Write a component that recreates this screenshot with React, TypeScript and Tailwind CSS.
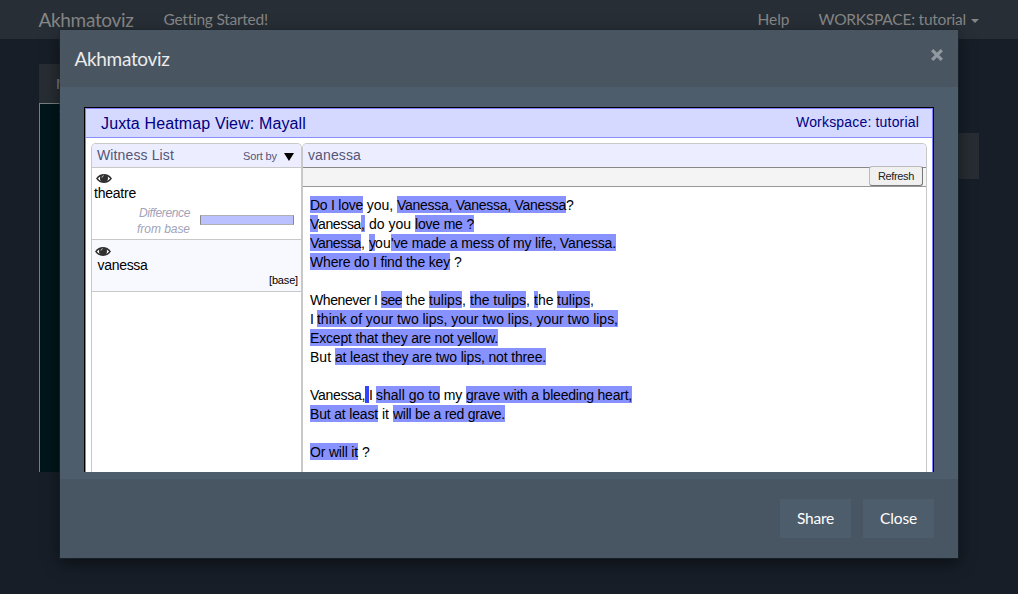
import React from "react";

type Segment = { text: string; width: number; tone?: "on" | "strong" };

const plain = (text: string, width: number): Segment => ({ text, width });
const diff = (text: string, width: number): Segment => ({ text, width, tone: "on" });

const poem: Segment[][] = [
  [diff("Do I love", 53), plain(" you, ", 34), diff("Vanessa, Vanessa, Vanessa", 169), plain("?", 8)],
  [diff("V", 8), plain("anessa", 43), diff(",", 4), plain(" do you ", 50), diff("love me ?", 59)],
  [diff("Vanessa", 51), plain(", ", 8), diff("y", 6), plain("ou", 16), diff("'ve made a mess of my life, Vanessa.", 225)],
  [diff("Where do I find the key", 140), plain(" ?", 12)],
  [],
  [
    plain("Whenever I ", 71), diff("see", 21), plain(" the ", 27), diff("tulips", 33), plain(", ", 8),
    diff("the tulips", 56), plain(", ", 8), diff("t", 4), plain("he ", 19), diff("tulips", 33), plain(",", 4),
  ],
  [plain("I ", 7), diff("think of your two lips, your two lips, your two lips,", 301)],
  [diff("Except that they are not yellow.", 188)],
  [plain("But ", 25), diff("at least they are two lips, not three.", 211)],
  [],
  [
    plain("Vanessa,", 55), { text: " ", width: 4, tone: "strong" }, plain("I ", 7), diff("shall go to", 64),
    plain(" my ", 26), diff("grave with a bleeding heart,", 166),
  ],
  [diff("But at least", 68), plain(" it ", 15), diff("will be a red grave.", 112)],
  [],
  [diff("Or will it", 48), plain(" ?", 12)],
];

function Fit({ text, width, className = "" }: { text: string; width: number; className?: string }) {
  const ref = React.useRef<HTMLSpanElement>(null);
  const [spacing, setSpacing] = React.useState(0);
  React.useLayoutEffect(() => {
    const el = ref.current;
    if (!el) return;
    setSpacing((width - el.getBoundingClientRect().width) / text.length);
  }, [text, width]);
  return (
    <span ref={ref} className={"inline-block flex-none whitespace-pre " + className} style={{ letterSpacing: spacing }}>
      {text}
    </span>
  );
}

function PoemSegment({ segment }: { segment: Segment }) {
  const tone =
    segment.tone === "strong" ? "bg-[#3344ff]" : segment.tone === "on" ? "bg-[#8892ff]" : "";
  return <Fit text={segment.text} width={segment.width} className={"h-[17px] " + tone} />;
}

function Eye() {
  return (
    <svg width="16" height="11" viewBox="0 0 16 11" className="block">
      <path d="M0 5.4C4 -.4 12 -.4 16 5.4 12 11.4 4 11.4 0 5.4Z" fill="#303030" />
      <path d="M1.9 5.6C2.6 4.6 3.4 3.9 4.3 3.4 3.8 4.8 3.9 6.6 4.8 8 3.6 7.4 2.6 6.6 1.9 5.6ZM14.1 5.6C13.4 4.6 12.6 3.9 11.7 3.4 12.2 4.8 12.1 6.6 11.2 8 12.4 7.4 13.4 6.6 14.1 5.6Z" fill="#fff" />
      <path d="M6 4.5C6.2 3.4 6.8 2.8 7.7 2.7" stroke="#ddd" strokeWidth="1" fill="none" />
    </svg>
  );
}

function Navbar() {
  return (
    <nav className="flex h-[39px] items-start bg-[#272e35] pl-[38.5px] pr-[39px] pt-[8px] text-[#868686]">
      <span className="text-[19px] leading-[24px]"><Fit text="Akhmatoviz" width={95} /></span>
      <span className="ml-[30px] text-[15.5px] leading-[23px]"><Fit text="Getting Started!" width={104} /></span>
      <span className="ml-auto text-[15.5px] leading-[23px]"><Fit text="Help" width={32} /></span>
      <span className="ml-[29px] text-[15.5px] leading-[23px]"><Fit text="WORKSPACE: tutorial" width={147.5} /></span>
      <svg width="8" height="4" viewBox="0 0 8 4" className="ml-[5px] mt-[11px]"><path d="M0 0H8L4 4Z" fill="#868686" /></svg>
    </nav>
  );
}

function Backdrop() {
  return (
    <div className="h-[594px] w-[1018px] bg-[#171e27]">
      <Navbar />
      <div className="flex items-start justify-between px-[39px] pt-[25px]">
        <div className="w-[120px]">
          <div className="h-[39px] bg-[#272d33] pl-[17px] pt-[10px] text-[14px] font-bold leading-[20px] text-[#777]">Mayall</div>
          <div className="h-[369px] border-l border-t border-[#75817f] bg-[#00161b] pl-[18px] pt-[2px] font-['Liberation_Mono',monospace] text-[12px] text-[#2d3d42]">1</div>
        </div>
        <div className="mt-[69px] h-[46px] w-[100px] bg-[#272d33]" />
      </div>
    </div>
  );
}

function WitnessList() {
  return (
    <section className="w-[211px] flex-none rounded-t-[5px] border border-b-0 border-[#c8c8c8] bg-white">
      <header className="flex h-[24px] items-start rounded-t-[4px] border-b border-[#c8c8c8] bg-[#eceeff] pl-[5px] text-[#555577]">
        <span className="text-[14px] leading-[23px]"><Fit text="Witness List" width={77} /></span>
        <span className="ml-auto text-[11px] leading-[25px]"><Fit text="Sort by" width={34} /></span>
        <svg width="10" height="8" viewBox="0 0 10 8" className="ml-[7px] mr-[7px] mt-[9px]"><path d="M0 0H10L5 8Z" fill="#000" /></svg>
      </header>
      <div className="h-[72px] border-b border-[#c8c8c8] pt-[5px]">
        <div className="pl-[4px]"><Eye /></div>
        <div className="pl-[2px] text-[14px] leading-[18px] text-black"><Fit text="theatre" width={42} /></div>
        <div className="flex pt-[3px]">
          <div className="w-[98px] text-right text-[12px] italic leading-[16px] text-[#a2a2b8]">
            <Fit text="Difference" width={51} />
            <Fit text="from base" width={53} />
          </div>
          <div className="ml-[10px] mt-[10px] h-[10px] w-[94px] border border-x-[#888] border-y-[#b0b0b4] bg-[#bbc0ff]" />
        </div>
      </div>
      <div className="h-[52px] border-b border-[#c8c8c8] bg-[#f8f9ff] pt-[6px]">
        <div className="pl-[3px]"><Eye /></div>
        <div className="pl-[5.5px] text-[14px] leading-[16px] text-black"><Fit text="vanessa" width={50} /></div>
        <div className="pr-[3px] pt-[1px] text-right text-[11px] leading-[13px] text-black"><Fit text="[base]" width={29} /></div>
      </div>
    </section>
  );
}

function TextPanel() {
  return (
    <section className="w-[625px] flex-none rounded-t-[5px] border border-b-0 border-[#c8c8c8] bg-white">
      <header className="h-[24px] rounded-t-[4px] border-b border-[#888] bg-[#eceeff] pl-[5px] text-[14px] leading-[23px] text-[#555577]">
        <Fit text="vanessa" width={53} />
      </header>
      <div className="flex h-[19px] justify-end border-b border-[#999] bg-[#f4f4f4] pr-[3px]">
        <button className="-mt-[2px] h-[20px] w-[54px] flex-none rounded-[3px] border border-b-[#777] border-l-[#bbb] border-r-[#777] border-t-[#bbb] bg-[#f0f0f0] text-[11px] leading-[18px] text-[#222]">
          <Fit text="Refresh" width={36} />
        </button>
      </div>
      <div className="pl-[7px] pt-[9px] text-[14px] leading-[18px] text-black">
        {poem.map((line, i) => (
          <div key={i} className="flex h-[19px]">
            {line.map((segment, j) => <PoemSegment key={j} segment={segment} />)}
          </div>
        ))}
      </div>
    </section>
  );
}

function Heatmap() {
  return (
    <div className="h-[365px] w-[850px] overflow-hidden border border-b-0 border-black font-['Liberation_Sans',Arial,sans-serif]">
      <div className="h-[364px] border border-b-0 border-[#8080ff] bg-white">
        <div className="flex h-[29px] justify-between border-b border-[#8890ff] bg-[#d5d8ff] pl-[15px] pr-[13px] text-[#000080]">
          <span className="text-[16px] leading-[29px]"><Fit text="Juxta Heatmap View: Mayall" width={205} /></span>
          <span className="text-[14px] leading-[27px]"><Fit text="Workspace: tutorial" width={123} /></span>
        </div>
        <div className="flex h-[334px] pl-[5px] pt-[5px]">
          <WitnessList />
          <TextPanel />
        </div>
      </div>
    </div>
  );
}

function Modal() {
  return (
    <div className="absolute left-[60px] top-[30px] h-[528px] w-[898px] bg-[#4e5d6c] shadow-[0_0_0_1px_rgba(28,38,50,0.6),0_5px_15px_rgba(0,0,0,0.5)]">
      <header className="flex h-[57px] justify-between bg-[#495662] pl-[14.5px] pr-[15px] text-[#ebebeb]">
        <span className="text-[19px] leading-[58px]"><Fit text="Akhmatoviz" width={95} /></span>
        <svg width="12" height="12" viewBox="0 0 12 12" className="mt-[19px]"><path d="M1.2 1.2L10.8 10.8M10.8 1.2L1.2 10.8" stroke="#919aa1" strokeWidth="3.2" /></svg>
      </header>
      <div className="h-[392px] pl-[24px] pt-[20px]"><Heatmap /></div>
      <footer className="flex h-[79px] justify-end gap-[12px] bg-[#485562] pr-[24px] pt-[20px] text-[15.5px] text-white">
        <button className="h-[39px] w-[71px] bg-[#4e5d6c] leading-[39px]"><Fit text="Share" width={37} /></button>
        <button className="h-[39px] w-[71px] bg-[#4e5d6c] leading-[39px]"><Fit text="Close" width={37} /></button>
      </footer>
    </div>
  );
}

export default function App() {
  return (
    <div className="relative h-[594px] w-[1018px] overflow-hidden font-['Lato',sans-serif]">
      <Backdrop />
      <Modal />
    </div>
  );
}
